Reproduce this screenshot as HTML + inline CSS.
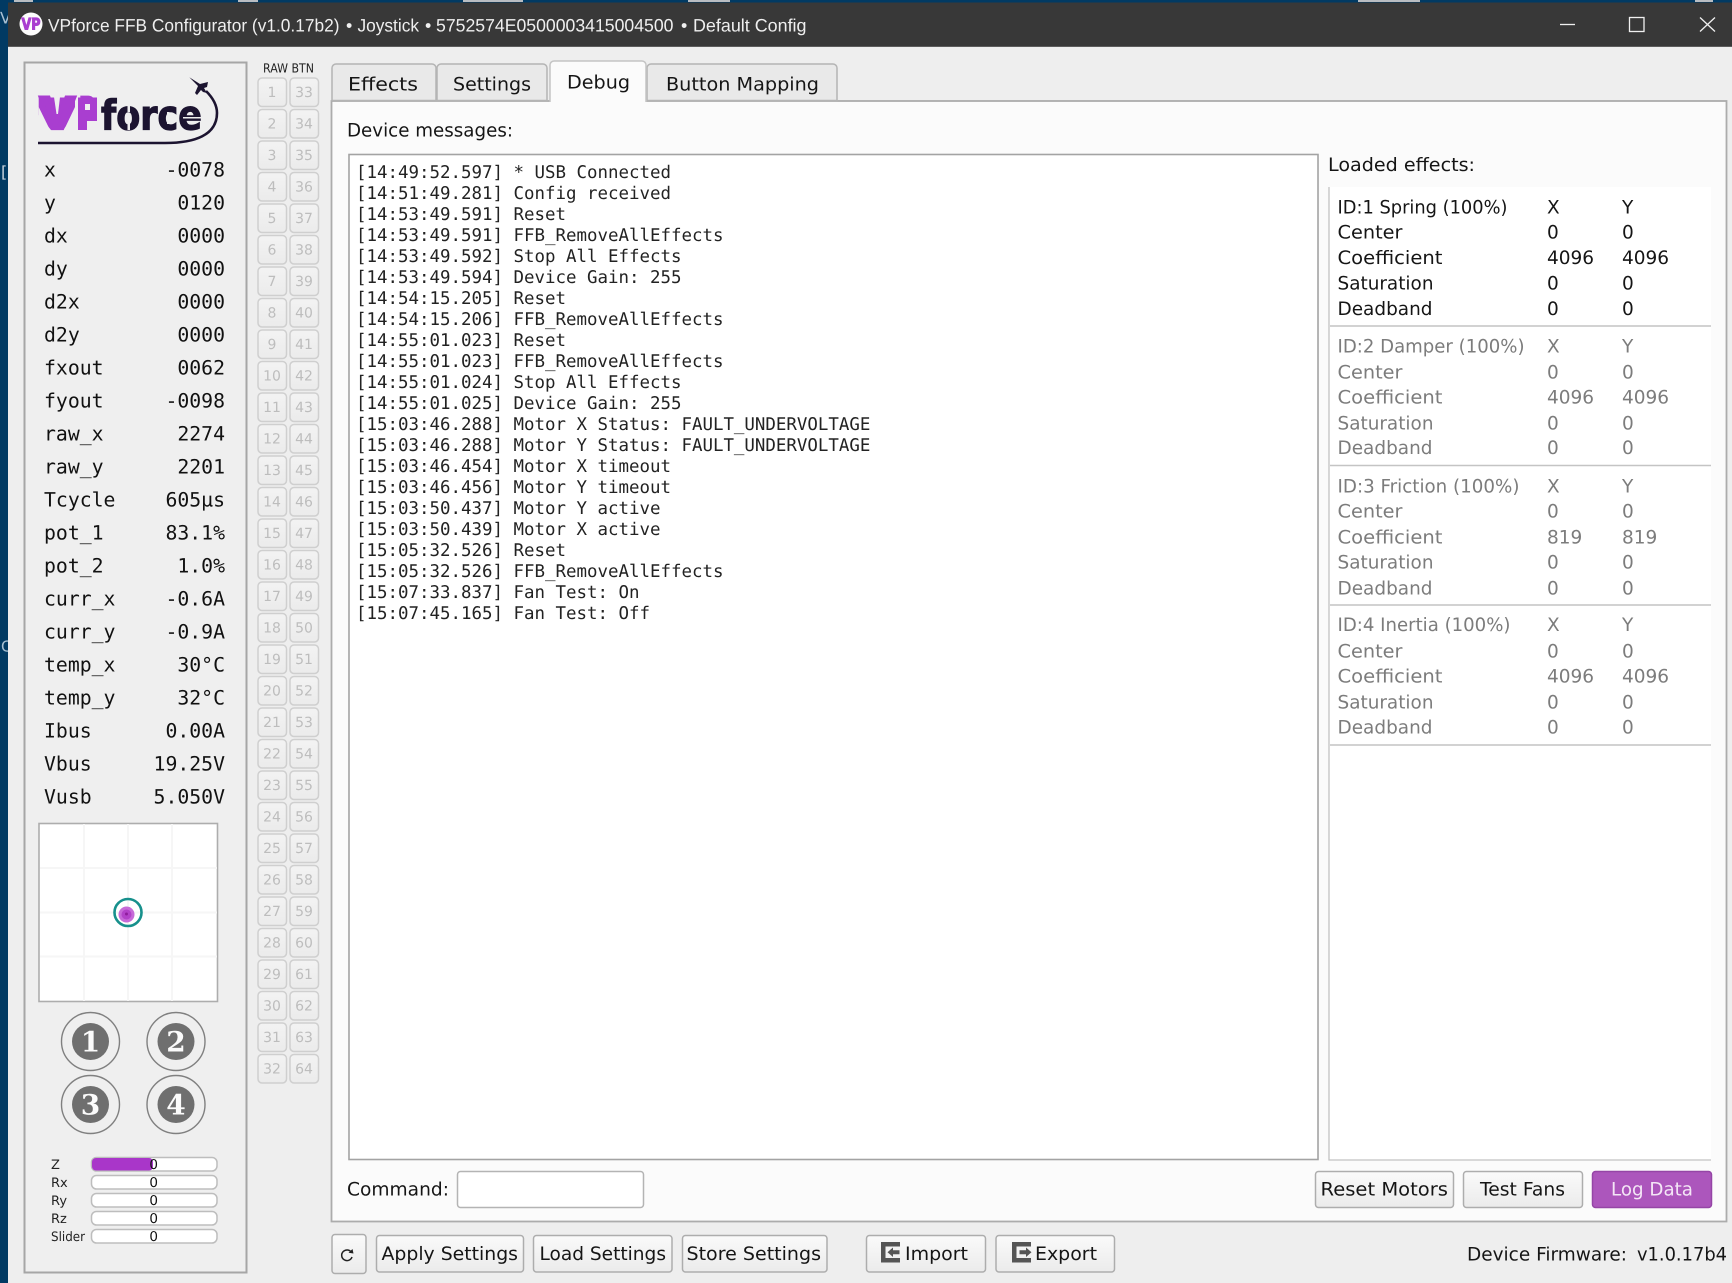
<!DOCTYPE html>
<html lang="en">
<head>
<meta charset="utf-8">
<title>VPforce FFB Configurator</title>
<style>
html,body{margin:0;padding:0;background:#eee;width:1732px;height:1283px;overflow:hidden}
svg{display:block}
text{font-family:"DejaVu Sans","Liberation Sans",sans-serif;font-size:18.5px;fill:#151515;text-rendering:geometricPrecision;transform:translateY(-.6px)}
.m{font-family:"DejaVu Sans Mono","Liberation Mono",monospace;font-size:19.8px;fill:#111}
.r{text-anchor:end}
.l text{font-family:"DejaVu Sans Mono","Liberation Mono",monospace;font-size:17.45px;fill:#222}
.g text{fill:#7c7c7c}
.b text{font-size:14px;fill:#bdbdbd;text-anchor:middle}
.b rect{fill:url(#rb);stroke:#cfcfcf;stroke-width:1.5}
.s text{font-size:13px;fill:#222}
.s text.v{font-size:13.5px;text-anchor:middle;fill:#111}
.s rect{fill:#fff;stroke:#bdbdbd;stroke-width:1.5}
.n{font-family:"DejaVu Serif","Liberation Serif",serif;font-weight:bold;font-size:28px;fill:#fbfbfb;text-anchor:middle}
.btn{fill:url(#bg);stroke:#adadad;stroke-width:1.5}
.tt{font-family:'Liberation Sans',sans-serif;font-size:18px;fill:#efefef;transform:none}
</style>
</head>
<body>
<svg width="1732" height="1283" viewBox="0 0 1732 1283" xmlns="http://www.w3.org/2000/svg">
<defs>
<linearGradient id="bg" x1="0" y1="0" x2="0" y2="1"><stop offset="0" stop-color="#fafafa"/><stop offset="1" stop-color="#ebebeb"/></linearGradient>
<linearGradient id="rb" x1="0" y1="0" x2="0" y2="1"><stop offset="0" stop-color="#f3f3f3"/><stop offset="1" stop-color="#ebebeb"/></linearGradient>
</defs>

<!-- desktop -->
<rect width="1732" height="1283" fill="#013a63"/>
<g fill="#b9bdc2">
<rect x="14" y="0" width="19" height="2"/><rect x="238" y="0" width="20" height="2"/><rect x="463" y="0" width="60" height="2"/><rect x="688" y="0" width="42" height="2"/><rect x="1358" y="0" width="62" height="2"/><rect x="1695" y="0" width="18" height="2"/>
</g>
<text x="1" y="178" style="font-size:16px;fill:#c7d3dd">[</text>
<text x="0" y="24" style="font-size:16px;fill:#a8c0d2">V</text>
<text x="1" y="652" style="font-size:15px;fill:#a8c0d2">C</text>

<!-- window -->
<rect x="8" y="2.5" width="1724" height="1281" fill="#eeeeee"/>
<rect x="8" y="2.5" width="1724" height="44.3" fill="#383838"/>
<circle cx="31" cy="24" r="11.5" fill="#fdfdfd"/>
<text x="21.500" y="30" textLength="19" lengthAdjust="spacingAndGlyphs" style="font-size:16px;font-weight:bold;fill:#a93ed0;stroke:#a93ed0;stroke-width:1">VP</text>
<text class="tt" x="48" y="31.500" textLength="291.500" lengthAdjust="spacingAndGlyphs">VPforce FFB Configurator (v1.0.17b2)</text>
<text class="tt" x="346" y="31.500">•</text>
<text class="tt" x="357.500" y="31.500" textLength="61.500" lengthAdjust="spacingAndGlyphs">Joystick</text>
<text class="tt" x="425" y="31.500">•</text>
<text class="tt" x="436" y="31.500" textLength="237.500" lengthAdjust="spacingAndGlyphs">5752574E0500003415004500</text>
<text class="tt" x="681" y="31.500">•</text>
<text class="tt" x="693" y="31.500" textLength="113.500" lengthAdjust="spacingAndGlyphs">Default Config</text>
<path d="M1560 24.5H1575" stroke="#f0f0f0" stroke-width="1.3" fill="none"/>
<rect x="1629.5" y="17.5" width="14.5" height="14" fill="none" stroke="#f0f0f0" stroke-width="1.3"/>
<path d="M1700 17.5L1715 31.5M1715 17.5L1700 31.5" stroke="#f0f0f0" stroke-width="1.3" fill="none"/>

<!-- left panel -->
<rect x="24.5" y="62.5" width="222" height="1210" fill="#efefef" stroke="#a6a6a6" stroke-width="2"/>

<!-- logo -->
<path d="M38.700 97.500H75V115L63 130H51L38.700 115Z" fill="#a93ed0"/>
<path d="M78 97.500H97V121H87V130H78Z" fill="#a93ed0"/>
<text x="40" y="129" textLength="35" lengthAdjust="spacingAndGlyphs" style="font-size:43px;font-weight:bold;fill:#a93ed0;stroke:#a93ed0;stroke-width:3.2;stroke-linejoin:miter">V</text>
<text x="79" y="129" textLength="17" lengthAdjust="spacingAndGlyphs" style="font-size:43px;font-weight:bold;fill:#a93ed0;stroke:#a93ed0;stroke-width:3">P</text>
<g fill="#efefef">
<path d="M54 97H60L58 114H56.500Z"/>
<path d="M38.700 107L50 130H38.700Z"/>
<path d="M75 107L64 130H75Z"/>
<rect x="85" y="104" width="5" height="6"/>
<rect x="87" y="121.500" width="10" height="9"/>
</g>
<text x="101" y="130" textLength="101" lengthAdjust="spacingAndGlyphs" style="font-size:41px;font-weight:bold;fill:#1c1430;stroke:#1c1430;stroke-width:1.2">force</text>
<g fill="#efefef">
<rect x="127.500" y="105" width="2.500" height="7"/><rect x="127.500" y="123" width="2.500" height="7"/>
<rect x="167" y="112" width="2.500" height="12"/><rect x="183" y="117" width="18" height="1.500"/>
</g>
<path d="M38 143H165C195 143 217 135 217 113C217 104 212 97 206 91" fill="none" stroke="#1c1430" stroke-width="2.6"/>
<path d="M189.3 77.3L200 84L208 82L207 87L204 88L207 93L203 92L201 90L197 95L195 93L198 86Z" fill="#1c1430"/>

<!-- values -->
<g>
<text class="m" x="44" y="177">x</text><text class="m r" x="225" y="177">-0078</text>
<text class="m" x="44" y="210">y</text><text class="m r" x="225" y="210">0120</text>
<text class="m" x="44" y="243">dx</text><text class="m r" x="225" y="243">0000</text>
<text class="m" x="44" y="276">dy</text><text class="m r" x="225" y="276">0000</text>
<text class="m" x="44" y="309">d2x</text><text class="m r" x="225" y="309">0000</text>
<text class="m" x="44" y="342">d2y</text><text class="m r" x="225" y="342">0000</text>
<text class="m" x="44" y="375">fxout</text><text class="m r" x="225" y="375">0062</text>
<text class="m" x="44" y="408">fyout</text><text class="m r" x="225" y="408">-0098</text>
<text class="m" x="44" y="441">raw_x</text><text class="m r" x="225" y="441">2274</text>
<text class="m" x="44" y="474">raw_y</text><text class="m r" x="225" y="474">2201</text>
<text class="m" x="44" y="507">Tcycle</text><text class="m r" x="225" y="507">605µs</text>
<text class="m" x="44" y="540">pot_1</text><text class="m r" x="225" y="540">83.1%</text>
<text class="m" x="44" y="573">pot_2</text><text class="m r" x="225" y="573">1.0%</text>
<text class="m" x="44" y="606">curr_x</text><text class="m r" x="225" y="606">-0.6A</text>
<text class="m" x="44" y="639">curr_y</text><text class="m r" x="225" y="639">-0.9A</text>
<text class="m" x="44" y="672">temp_x</text><text class="m r" x="225" y="672">30°C</text>
<text class="m" x="44" y="705">temp_y</text><text class="m r" x="225" y="705">32°C</text>
<text class="m" x="44" y="738">Ibus</text><text class="m r" x="225" y="738">0.00A</text>
<text class="m" x="44" y="771">Vbus</text><text class="m r" x="225" y="771">19.25V</text>
<text class="m" x="44" y="804">Vusb</text><text class="m r" x="225" y="804">5.050V</text>
</g>

<!-- joystick -->
<rect x="39" y="823.5" width="178.5" height="178" fill="#fff" stroke="#adadad" stroke-width="1.6"/>
<path d="M84 824V1001M128 824V1001M172 824V1001M40 868H217M40 912.5H217M40 956.5H217" stroke="#f6f6f6" stroke-width="2" fill="none"/>
<circle cx="128" cy="912.5" r="13.5" fill="none" stroke="#17908c" stroke-width="2.6"/>
<circle cx="126.5" cy="914.5" r="8" fill="#c76ad8"/>
<circle cx="126.5" cy="914.5" r="5" fill="#b341c9"/>
<circle cx="126.5" cy="914" r="1.5" fill="#8f1d9c"/>

<!-- round buttons -->
<circle cx="90.5" cy="1041.5" r="29" fill="none" stroke="#808080" stroke-width="1.4"/>
<circle cx="176" cy="1041.5" r="29" fill="none" stroke="#808080" stroke-width="1.4"/>
<circle cx="90.5" cy="1104.5" r="29" fill="none" stroke="#808080" stroke-width="1.4"/>
<circle cx="176" cy="1104.5" r="29" fill="none" stroke="#808080" stroke-width="1.4"/>
<circle cx="90.5" cy="1041.5" r="18.5" fill="#6f6f6f"/>
<circle cx="176" cy="1041.5" r="18.5" fill="#6f6f6f"/>
<circle cx="90.5" cy="1104.5" r="18.5" fill="#6f6f6f"/>
<circle cx="176" cy="1104.5" r="18.5" fill="#6f6f6f"/>
<text class="n" x="90.5" y="1052">1</text>
<text class="n" x="176" y="1052">2</text>
<text class="n" x="90.5" y="1115">3</text>
<text class="n" x="176" y="1115">4</text>

<!-- sliders -->
<g class="s">
<text x="51" y="1169.500">Z</text><rect x="91.5" y="1157.5" width="125.5" height="13.5" rx="5"/>
<rect x="92" y="1158" width="61" height="12.5" rx="4" style="fill:#a936c9;stroke:none"/><text class="v" x="153.7" y="1169.500">0</text>
<text x="51" y="1187.500">Rx</text><rect x="91.5" y="1175.5" width="125.5" height="13.5" rx="5"/><text class="v" x="153.7" y="1187.500">0</text>
<text x="51" y="1205.500">Ry</text><rect x="91.5" y="1193.5" width="125.5" height="13.5" rx="5"/><text class="v" x="153.7" y="1205.500">0</text>
<text x="51" y="1223.500">Rz</text><rect x="91.5" y="1211.5" width="125.5" height="13.5" rx="5"/><text class="v" x="153.7" y="1223.500">0</text>
<text x="51" y="1241.500" textLength="34" lengthAdjust="spacingAndGlyphs">Slider</text><rect x="91.5" y="1229.5" width="125.5" height="13.5" rx="5"/><text class="v" x="153.7" y="1241.500">0</text>
</g>

<!-- raw buttons -->
<text x="263" y="73" textLength="51" lengthAdjust="spacingAndGlyphs" style="font-size:12.5px;fill:#222">RAW BTN</text>
<g class="b">
<rect x="258" y="78" width="28.5" height="28.5" rx="4"/><text x="272" y="97.500">1</text><rect x="290" y="78" width="28.5" height="28.5" rx="4"/><text x="304" y="97.500">33</text>
<rect x="258" y="109.5" width="28.5" height="28.5" rx="4"/><text x="272" y="129">2</text><rect x="290" y="109.5" width="28.5" height="28.5" rx="4"/><text x="304" y="129">34</text>
<rect x="258" y="141" width="28.5" height="28.5" rx="4"/><text x="272" y="160.500">3</text><rect x="290" y="141" width="28.5" height="28.5" rx="4"/><text x="304" y="160.500">35</text>
<rect x="258" y="172.5" width="28.5" height="28.5" rx="4"/><text x="272" y="192">4</text><rect x="290" y="172.5" width="28.5" height="28.5" rx="4"/><text x="304" y="192">36</text>
<rect x="258" y="204" width="28.5" height="28.5" rx="4"/><text x="272" y="223.500">5</text><rect x="290" y="204" width="28.5" height="28.5" rx="4"/><text x="304" y="223.500">37</text>
<rect x="258" y="235.5" width="28.5" height="28.5" rx="4"/><text x="272" y="255">6</text><rect x="290" y="235.5" width="28.5" height="28.5" rx="4"/><text x="304" y="255">38</text>
<rect x="258" y="267" width="28.5" height="28.5" rx="4"/><text x="272" y="286.500">7</text><rect x="290" y="267" width="28.5" height="28.5" rx="4"/><text x="304" y="286.500">39</text>
<rect x="258" y="298.5" width="28.5" height="28.5" rx="4"/><text x="272" y="318">8</text><rect x="290" y="298.5" width="28.5" height="28.5" rx="4"/><text x="304" y="318">40</text>
<rect x="258" y="330" width="28.5" height="28.5" rx="4"/><text x="272" y="349.500">9</text><rect x="290" y="330" width="28.5" height="28.5" rx="4"/><text x="304" y="349.500">41</text>
<rect x="258" y="361.5" width="28.5" height="28.5" rx="4"/><text x="272" y="381">10</text><rect x="290" y="361.5" width="28.5" height="28.5" rx="4"/><text x="304" y="381">42</text>
<rect x="258" y="393" width="28.5" height="28.5" rx="4"/><text x="272" y="412.500">11</text><rect x="290" y="393" width="28.5" height="28.5" rx="4"/><text x="304" y="412.500">43</text>
<rect x="258" y="424.5" width="28.5" height="28.5" rx="4"/><text x="272" y="444">12</text><rect x="290" y="424.5" width="28.5" height="28.5" rx="4"/><text x="304" y="444">44</text>
<rect x="258" y="456" width="28.5" height="28.5" rx="4"/><text x="272" y="475.500">13</text><rect x="290" y="456" width="28.5" height="28.5" rx="4"/><text x="304" y="475.500">45</text>
<rect x="258" y="487.5" width="28.5" height="28.5" rx="4"/><text x="272" y="507">14</text><rect x="290" y="487.5" width="28.5" height="28.5" rx="4"/><text x="304" y="507">46</text>
<rect x="258" y="519" width="28.5" height="28.5" rx="4"/><text x="272" y="538.500">15</text><rect x="290" y="519" width="28.5" height="28.5" rx="4"/><text x="304" y="538.500">47</text>
<rect x="258" y="550.5" width="28.5" height="28.5" rx="4"/><text x="272" y="570">16</text><rect x="290" y="550.5" width="28.5" height="28.5" rx="4"/><text x="304" y="570">48</text>
<rect x="258" y="582" width="28.5" height="28.5" rx="4"/><text x="272" y="601.500">17</text><rect x="290" y="582" width="28.5" height="28.5" rx="4"/><text x="304" y="601.500">49</text>
<rect x="258" y="613.5" width="28.5" height="28.5" rx="4"/><text x="272" y="633">18</text><rect x="290" y="613.5" width="28.5" height="28.5" rx="4"/><text x="304" y="633">50</text>
<rect x="258" y="645" width="28.5" height="28.5" rx="4"/><text x="272" y="664.500">19</text><rect x="290" y="645" width="28.5" height="28.5" rx="4"/><text x="304" y="664.500">51</text>
<rect x="258" y="676.5" width="28.5" height="28.5" rx="4"/><text x="272" y="696">20</text><rect x="290" y="676.5" width="28.5" height="28.5" rx="4"/><text x="304" y="696">52</text>
<rect x="258" y="708" width="28.5" height="28.5" rx="4"/><text x="272" y="727.500">21</text><rect x="290" y="708" width="28.5" height="28.5" rx="4"/><text x="304" y="727.500">53</text>
<rect x="258" y="739.5" width="28.5" height="28.5" rx="4"/><text x="272" y="759">22</text><rect x="290" y="739.5" width="28.5" height="28.5" rx="4"/><text x="304" y="759">54</text>
<rect x="258" y="771" width="28.5" height="28.5" rx="4"/><text x="272" y="790.500">23</text><rect x="290" y="771" width="28.5" height="28.5" rx="4"/><text x="304" y="790.500">55</text>
<rect x="258" y="802.5" width="28.5" height="28.5" rx="4"/><text x="272" y="822">24</text><rect x="290" y="802.5" width="28.5" height="28.5" rx="4"/><text x="304" y="822">56</text>
<rect x="258" y="834" width="28.5" height="28.5" rx="4"/><text x="272" y="853.500">25</text><rect x="290" y="834" width="28.5" height="28.5" rx="4"/><text x="304" y="853.500">57</text>
<rect x="258" y="865.5" width="28.5" height="28.5" rx="4"/><text x="272" y="885">26</text><rect x="290" y="865.5" width="28.5" height="28.5" rx="4"/><text x="304" y="885">58</text>
<rect x="258" y="897" width="28.5" height="28.5" rx="4"/><text x="272" y="916.500">27</text><rect x="290" y="897" width="28.5" height="28.5" rx="4"/><text x="304" y="916.500">59</text>
<rect x="258" y="928.5" width="28.5" height="28.5" rx="4"/><text x="272" y="948">28</text><rect x="290" y="928.5" width="28.5" height="28.5" rx="4"/><text x="304" y="948">60</text>
<rect x="258" y="960" width="28.5" height="28.5" rx="4"/><text x="272" y="979.500">29</text><rect x="290" y="960" width="28.5" height="28.5" rx="4"/><text x="304" y="979.500">61</text>
<rect x="258" y="991.5" width="28.5" height="28.5" rx="4"/><text x="272" y="1011">30</text><rect x="290" y="991.5" width="28.5" height="28.5" rx="4"/><text x="304" y="1011">62</text>
<rect x="258" y="1023" width="28.5" height="28.5" rx="4"/><text x="272" y="1042.500">31</text><rect x="290" y="1023" width="28.5" height="28.5" rx="4"/><text x="304" y="1042.500">63</text>
<rect x="258" y="1054.5" width="28.5" height="28.5" rx="4"/><text x="272" y="1074">32</text><rect x="290" y="1054.5" width="28.5" height="28.5" rx="4"/><text x="304" y="1074">64</text>
</g>

<!-- tab pane -->
<rect x="331.5" y="101" width="1395" height="1120.5" fill="#fbfbfb" stroke="#acacac" stroke-width="1.8"/>
<path d="M332 100.5V68a4 4 0 0 1 4-4H432a4 4 0 0 1 4 4V100.500Z" fill="#e9e9e9" stroke="#b4b4b4" stroke-width="1.5"/>
<path d="M437 100.5V68a4 4 0 0 1 4-4H543a4 4 0 0 1 4 4V100.500Z" fill="#e9e9e9" stroke="#b4b4b4" stroke-width="1.5"/>
<path d="M647 100.5V68a4 4 0 0 1 4-4H833a4 4 0 0 1 4 4V100.500Z" fill="#e9e9e9" stroke="#b4b4b4" stroke-width="1.5"/>
<path d="M550 102V65a4 4 0 0 1 4-4H642a4 4 0 0 1 4 4V102" fill="#fbfbfb" stroke="#c4c4c4" stroke-width="1.5"/>
<rect x="551" y="99" width="94" height="4" fill="#fbfbfb"/>
<text x="348" y="91" textLength="70" lengthAdjust="spacingAndGlyphs">Effects</text>
<text x="453" y="91" textLength="78" lengthAdjust="spacingAndGlyphs">Settings</text>
<text x="567" y="89" textLength="63" lengthAdjust="spacingAndGlyphs">Debug</text>
<text x="666" y="91" textLength="153" lengthAdjust="spacingAndGlyphs">Button Mapping</text>

<text x="347" y="137" textLength="166" lengthAdjust="spacingAndGlyphs">Device messages:</text>

<!-- log -->
<rect x="349" y="154.500" width="969" height="1005" fill="#fff" stroke="#a3a3a3" stroke-width="1.6"/>
<g class="l" transform="translate(0,.5)">
<text x="356" y="178">[14:49:52.597] * USB Connected</text>
<text x="356" y="199">[14:51:49.281] Config received</text>
<text x="356" y="220">[14:53:49.591] Reset</text>
<text x="356" y="241">[14:53:49.591] FFB_RemoveAllEffects</text>
<text x="356" y="262">[14:53:49.592] Stop All Effects</text>
<text x="356" y="283">[14:53:49.594] Device Gain: 255</text>
<text x="356" y="304">[14:54:15.205] Reset</text>
<text x="356" y="325">[14:54:15.206] FFB_RemoveAllEffects</text>
<text x="356" y="346">[14:55:01.023] Reset</text>
<text x="356" y="367">[14:55:01.023] FFB_RemoveAllEffects</text>
<text x="356" y="388">[14:55:01.024] Stop All Effects</text>
<text x="356" y="409">[14:55:01.025] Device Gain: 255</text>
<text x="356" y="430">[15:03:46.288] Motor X Status: FAULT_UNDERVOLTAGE</text>
<text x="356" y="451">[15:03:46.288] Motor Y Status: FAULT_UNDERVOLTAGE</text>
<text x="356" y="472">[15:03:46.454] Motor X timeout</text>
<text x="356" y="493">[15:03:46.456] Motor Y timeout</text>
<text x="356" y="514">[15:03:50.437] Motor Y active</text>
<text x="356" y="535">[15:03:50.439] Motor X active</text>
<text x="356" y="556">[15:05:32.526] Reset</text>
<text x="356" y="577">[15:05:32.526] FFB_RemoveAllEffects</text>
<text x="356" y="598">[15:07:33.837] Fan Test: On</text>
<text x="356" y="619">[15:07:45.165] Fan Test: Off</text>
</g>

<!-- loaded effects -->
<text x="1328" y="171.500" textLength="147" lengthAdjust="spacingAndGlyphs">Loaded effects:</text>
<rect x="1329" y="187" width="382" height="973" fill="#fff"/>
<path d="M1329 187V1160H1711" fill="none" stroke="#c2c2c2" stroke-width="1.3"/>
<path d="M1330 326H1711M1330 465.500H1711M1330 605H1711M1330 745H1711" stroke="#c4c4c4" stroke-width="1.6" fill="none"/>

<text x="1337.500" y="214" textLength="170" lengthAdjust="spacingAndGlyphs">ID:1 Spring (100%)</text><text x="1547" y="214">X</text><text x="1622" y="214">Y</text>
<text x="1337.500" y="239" textLength="65" lengthAdjust="spacingAndGlyphs">Center</text><text x="1547" y="239">0</text><text x="1622" y="239">0</text>
<text x="1337.500" y="264.500" textLength="105" lengthAdjust="spacingAndGlyphs">Coefficient</text><text x="1547" y="264.500">4096</text><text x="1622" y="264.500">4096</text>
<text x="1337.500" y="290" textLength="96" lengthAdjust="spacingAndGlyphs">Saturation</text><text x="1547" y="290">0</text><text x="1622" y="290">0</text>
<text x="1337.500" y="315.500" textLength="95" lengthAdjust="spacingAndGlyphs">Deadband</text><text x="1547" y="315.500">0</text><text x="1622" y="315.500">0</text>

<g class="g">
<text x="1337.500" y="353" textLength="187" lengthAdjust="spacingAndGlyphs">ID:2 Damper (100%)</text><text x="1547" y="353">X</text><text x="1622" y="353">Y</text>
<text x="1337.500" y="379" textLength="65" lengthAdjust="spacingAndGlyphs">Center</text><text x="1547" y="379">0</text><text x="1622" y="379">0</text>
<text x="1337.500" y="404" textLength="105" lengthAdjust="spacingAndGlyphs">Coefficient</text><text x="1547" y="404">4096</text><text x="1622" y="404">4096</text>
<text x="1337.500" y="430" textLength="96" lengthAdjust="spacingAndGlyphs">Saturation</text><text x="1547" y="430">0</text><text x="1622" y="430">0</text>
<text x="1337.500" y="454.500" textLength="95" lengthAdjust="spacingAndGlyphs">Deadband</text><text x="1547" y="454.500">0</text><text x="1622" y="454.500">0</text>

<text x="1337.500" y="493" textLength="182" lengthAdjust="spacingAndGlyphs">ID:3 Friction (100%)</text><text x="1547" y="493">X</text><text x="1622" y="493">Y</text>
<text x="1337.500" y="518" textLength="65" lengthAdjust="spacingAndGlyphs">Center</text><text x="1547" y="518">0</text><text x="1622" y="518">0</text>
<text x="1337.500" y="544" textLength="105" lengthAdjust="spacingAndGlyphs">Coefficient</text><text x="1547" y="544">819</text><text x="1622" y="544">819</text>
<text x="1337.500" y="569" textLength="96" lengthAdjust="spacingAndGlyphs">Saturation</text><text x="1547" y="569">0</text><text x="1622" y="569">0</text>
<text x="1337.500" y="595" textLength="95" lengthAdjust="spacingAndGlyphs">Deadband</text><text x="1547" y="595">0</text><text x="1622" y="595">0</text>

<text x="1337.500" y="631.500" textLength="173" lengthAdjust="spacingAndGlyphs">ID:4 Inertia (100%)</text><text x="1547" y="631.500">X</text><text x="1622" y="631.500">Y</text>
<text x="1337.500" y="658" textLength="65" lengthAdjust="spacingAndGlyphs">Center</text><text x="1547" y="658">0</text><text x="1622" y="658">0</text>
<text x="1337.500" y="683" textLength="105" lengthAdjust="spacingAndGlyphs">Coefficient</text><text x="1547" y="683">4096</text><text x="1622" y="683">4096</text>
<text x="1337.500" y="709" textLength="96" lengthAdjust="spacingAndGlyphs">Saturation</text><text x="1547" y="709">0</text><text x="1622" y="709">0</text>
<text x="1337.500" y="734" textLength="95" lengthAdjust="spacingAndGlyphs">Deadband</text><text x="1547" y="734">0</text><text x="1622" y="734">0</text>
</g>

<!-- command row -->
<text x="347" y="1196" textLength="102" lengthAdjust="spacingAndGlyphs">Command:</text>
<rect x="457.500" y="1171.500" width="186" height="36" rx="3" fill="#fff" stroke="#b4b4b4" stroke-width="1.5"/>
<rect class="btn" x="1315.500" y="1171.500" width="138" height="36" rx="3"/>
<text x="1320.500" y="1196" textLength="127.500" lengthAdjust="spacingAndGlyphs">Reset Motors</text>
<rect class="btn" x="1463.500" y="1171.500" width="119" height="36" rx="3"/>
<text x="1480" y="1196" textLength="85" lengthAdjust="spacingAndGlyphs">Test Fans</text>
<rect x="1592.500" y="1171.500" width="119" height="36" rx="3" fill="#ac56bc" stroke="#9545a6" stroke-width="1.5"/>
<text x="1611" y="1196" textLength="82" lengthAdjust="spacingAndGlyphs" style="fill:#f4e6f6">Log Data</text>

<!-- bottom row -->
<rect class="btn" x="332" y="1234.500" width="34" height="39" rx="3"/>
<path d="M351.500 1252.500A5.300 5.300 0 1 0 352 1257" fill="none" stroke="#222" stroke-width="1.5"/>
<path d="M348.500 1252.800L353.500 1253.500L352.500 1249Z" fill="#222"/>
<rect class="btn" x="376.500" y="1235.500" width="147" height="36.500" rx="3"/>
<text x="381.500" y="1260.500" textLength="136.500" lengthAdjust="spacingAndGlyphs">Apply Settings</text>
<rect class="btn" x="533.500" y="1235.500" width="138.500" height="36.500" rx="3"/>
<text x="539.500" y="1260.500" textLength="126.500" lengthAdjust="spacingAndGlyphs">Load Settings</text>
<rect class="btn" x="682.500" y="1235.500" width="144.500" height="36.500" rx="3"/>
<text x="686.500" y="1260.500" textLength="134.500" lengthAdjust="spacingAndGlyphs">Store Settings</text>
<rect class="btn" x="866.500" y="1235.500" width="119" height="36.500" rx="3"/>
<path d="M881 1242H900V1246.500H885.500V1258H900V1262.500H881Z" fill="#555"/>
<path d="M887.500 1252.200L893 1247.500V1250.200H899.500V1254.300H893V1257Z" fill="#555"/>
<text x="905" y="1260.500" textLength="63" lengthAdjust="spacingAndGlyphs">Import</text>
<rect class="btn" x="996" y="1235.500" width="118.500" height="36.500" rx="3"/>
<path d="M1012 1242H1031V1246.500H1016.500V1258H1031V1262.500H1012Z" fill="#555"/>
<path d="M1031.500 1252.200L1026 1247.500V1250.200H1019.500V1254.300H1026V1257Z" fill="#555"/>
<text x="1035" y="1260.500" textLength="62" lengthAdjust="spacingAndGlyphs">Export</text>

<text x="1467" y="1261" textLength="160" lengthAdjust="spacingAndGlyphs">Device Firmware:</text>
<text x="1637" y="1261" textLength="90" lengthAdjust="spacingAndGlyphs">v1.0.17b4</text>
</svg>
</body>
</html>
